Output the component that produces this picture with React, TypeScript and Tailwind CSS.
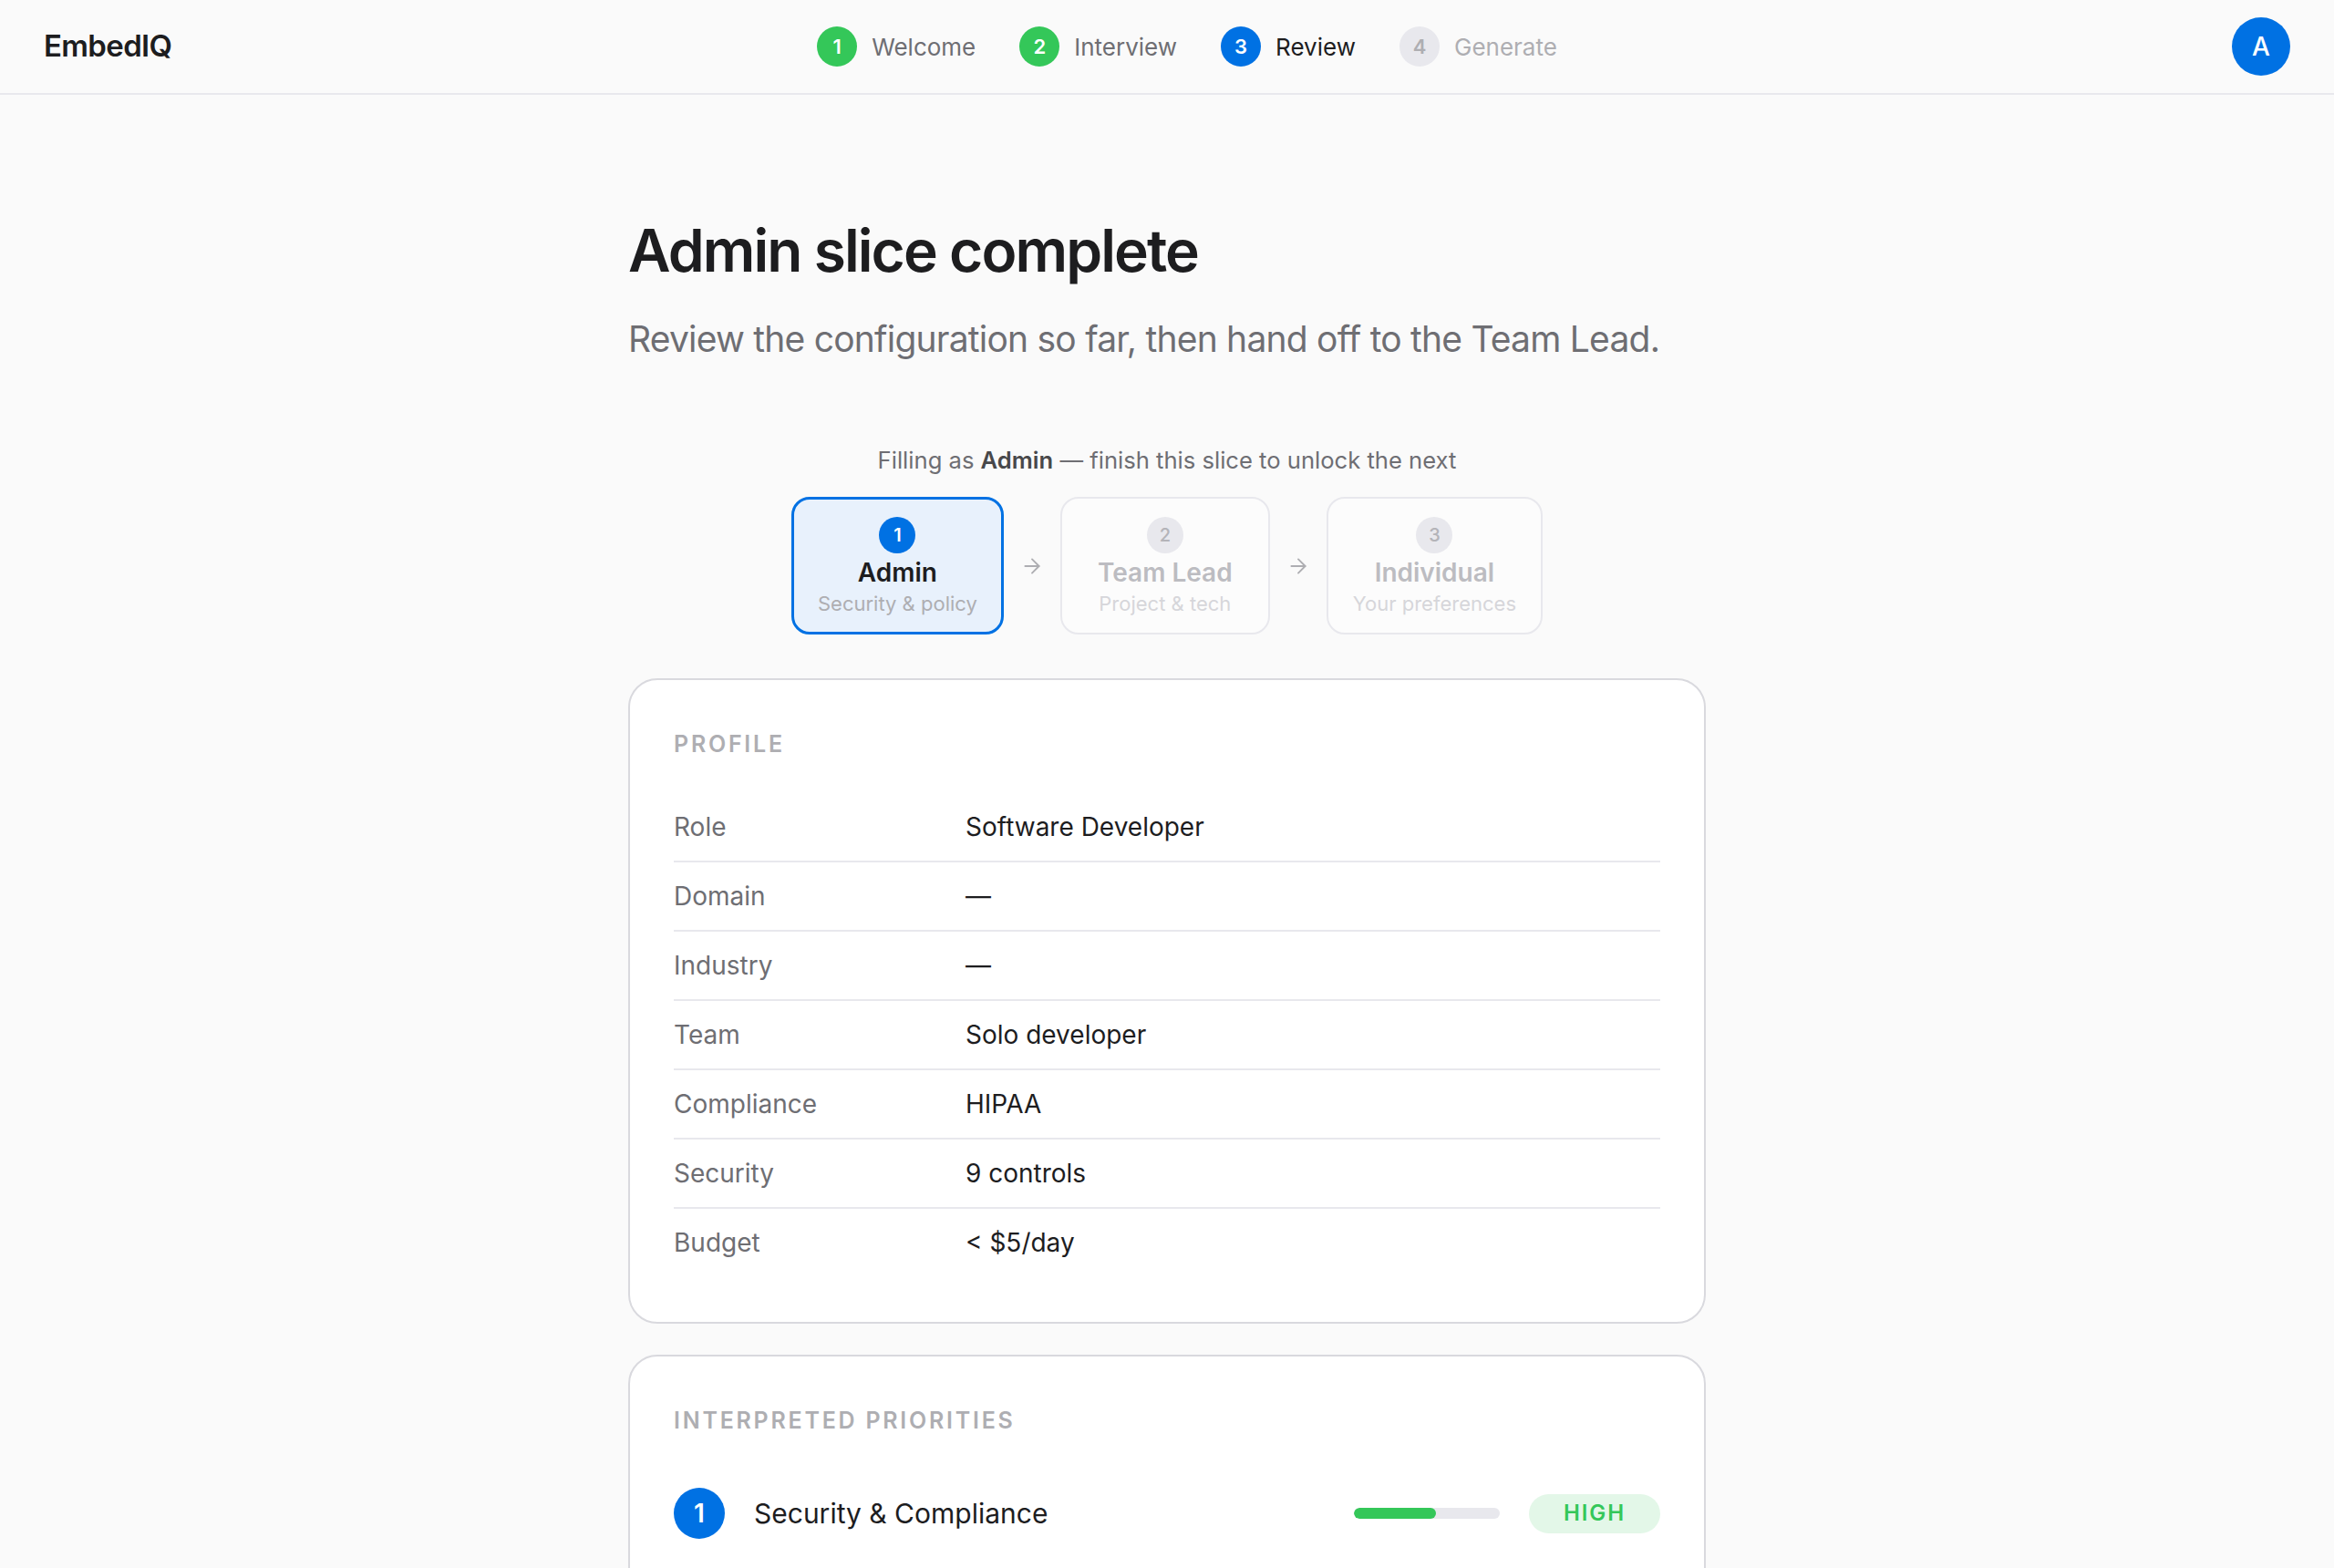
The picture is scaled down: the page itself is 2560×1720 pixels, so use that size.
import React from 'react';
import { ArrowRight } from 'lucide-react';

const steps = [
  { n: 1, label: 'Welcome', state: 'done' },
  { n: 2, label: 'Interview', state: 'done' },
  { n: 3, label: 'Review', state: 'active' },
  { n: 4, label: 'Generate', state: 'todo' },
];

const profile = [
  ['Role', 'Software Developer'],
  ['Domain', '—'],
  ['Industry', '—'],
  ['Team', 'Solo developer'],
  ['Compliance', 'HIPAA'],
  ['Security', '9 controls'],
  ['Budget', '< $5/day'],
];

const priorities = [
  { n: 1, label: 'Security & Compliance', pct: 56, level: 'HIGH' },
  { n: 2, label: 'Code Quality', pct: 48, level: 'HIGH' },
  { n: 3, label: 'Cost Efficiency', pct: 32, level: 'MEDIUM' },
];

const StepDot = ({ n, state }: { n: number; state: string }) => {
  const color =
    state === 'done'
      ? 'bg-[#34c759] text-white'
      : state === 'active'
        ? 'bg-[#0071e3] text-white'
        : 'bg-[#e8e8ed] text-[#aeaeb2]';
  return (
    <div className={`flex h-[44px] w-[44px] items-center justify-center rounded-full text-[22px] font-semibold ${color}`}>
      {n}
    </div>
  );
};

const SliceCard = ({
  n,
  title,
  sub,
  active,
}: {
  n: number;
  title: string;
  sub: string;
  active?: boolean;
}) => {
  if (active) {
    return (
      <div className="flex min-w-[230px] flex-col items-center rounded-[20px] border-[3px] border-[#0071e3] bg-[#e8f1fc] px-[26px] pt-[19px] pb-[16px]">
        <div className="flex h-10 w-10 items-center justify-center rounded-full bg-[#0071e3] text-[20px] font-semibold text-white">
          {n}
        </div>
        <div className="mt-[4px] text-[28px] leading-[35px] font-semibold text-[#1d1d1f]">{title}</div>
        <div className="mt-[1px] text-[22px] leading-[30px] text-[#aeaeb2]">{sub}</div>
      </div>
    );
  }
  return (
    <div className="flex min-w-[230px] flex-col items-center rounded-[20px] border-2 border-[#e8e8ed] bg-[#fcfcfc] px-[27px] pt-[20px] pb-[17px]">
      <div className="flex h-10 w-10 items-center justify-center rounded-full bg-[#e8e8ed] text-[20px] font-medium text-[#b4b4b9]">
        {n}
      </div>
      <div className="mt-[4px] text-[28px] leading-[35px] font-semibold text-[#bcbcc1]">{title}</div>
      <div className="mt-[1px] text-[22px] leading-[30px] text-[#d6d6da]">{sub}</div>
    </div>
  );
};

const Arrow = () => <ArrowRight size={26} strokeWidth={1.75} className="text-[#aeaeb2]" />;

export default function App() {
  return (
    <div className="h-[1720px] overflow-hidden bg-[#fafafa] font-['Inter',sans-serif] text-[#1d1d1f]">
      <header className="flex h-[104px] items-center border-b-2 border-[#e8e8ed] px-12">
        <div className="w-[300px] text-[33px] font-semibold tracking-[-0.02em]">EmbedIQ</div>
        <nav className="flex flex-1 items-center justify-center gap-12 pl-[44px]">
          {steps.map((s) => (
            <div key={s.n} className="flex items-center gap-4">
              <StepDot n={s.n} state={s.state} />
              <span
                className={`text-[26px] ${
                  s.state === 'active' ? 'text-[#1d1d1f]' : s.state === 'done' ? 'text-[#6e6e73]' : 'text-[#aeaeb2]'
                }`}
              >
                {s.label}
              </span>
            </div>
          ))}
        </nav>
        <div className="flex w-[300px] justify-end">
          <div className="flex h-16 w-16 items-center justify-center rounded-full bg-[#0071e3] text-[28px] font-medium text-white">
            A
          </div>
        </div>
      </header>

      <main className="mx-auto w-[1182px] pt-[136px]">
        <h1 className="text-[64px] leading-[1.1] font-semibold tracking-[-0.03em]">Admin slice complete</h1>
        <p className="mt-[34px] text-[39px] leading-[56px] tracking-[-0.02em] whitespace-nowrap text-[#6e6e73]">
          Review the configuration so far, then hand off to the Team Lead.
        </p>

        <div className="mt-[88px] flex flex-col items-center">
          <p className="text-[25.6px] leading-[34px] text-[#6e6e73]">
            Filling as <span className="font-semibold text-[#48484a]">Admin</span> — finish this slice to unlock the next
          </p>
          <div className="mt-[23px] flex items-center gap-[18px]">
            <SliceCard n={1} title="Admin" sub="Security & policy" active />
            <Arrow />
            <SliceCard n={2} title="Team Lead" sub="Project & tech" />
            <Arrow />
            <SliceCard n={3} title="Individual" sub="Your preferences" />
          </div>
        </div>

        <section className="mt-12 rounded-[32px] border-2 border-[#d9d9de] bg-white px-12 pt-[54px] pb-[50px]">
          <h2 className="mb-[38px] text-[25px] leading-[32px] font-semibold tracking-[0.11em] text-[#aeaeb2]">PROFILE</h2>
          {profile.map(([k, v]) => (
            <div key={k} className="flex border-b-2 border-[#e8e8ed] py-[19px] text-[28px] leading-[36px] last:border-b-0">
              <div className="w-[320px] text-[#6e6e73]">{k}</div>
              <div className="text-[#1d1d1f]">{v}</div>
            </div>
          ))}
        </section>

        <section className="mt-[34px] rounded-[32px] border-2 border-[#d9d9de] bg-white px-12 pt-[54px] pb-[50px]">
          <h2 className="mb-[38px] text-[25px] leading-[32px] font-semibold tracking-[0.11em] text-[#aeaeb2]">
            INTERPRETED PRIORITIES
          </h2>
          {priorities.map((p) => (
            <div key={p.n} className="flex items-center py-5">
              <div className="flex h-14 w-14 items-center justify-center rounded-full bg-[#0071e3] text-[28px] font-semibold text-white">
                {p.n}
              </div>
              <div className="ml-8 text-[30px] text-[#1d1d1f]">{p.label}</div>
              <div className="ml-auto h-3 w-[160px] overflow-hidden rounded-full bg-[#e8e8ed]">
                <div className="h-full rounded-full bg-[#34c759]" style={{ width: `${p.pct}%` }} />
              </div>
              <div className="ml-8 flex h-[43px] w-[144px] items-center justify-center rounded-full bg-[#e3f7e8] text-[24px] font-semibold tracking-[0.08em] text-[#34c759]">
                {p.level}
              </div>
            </div>
          ))}
        </section>
      </main>
    </div>
  );
}
